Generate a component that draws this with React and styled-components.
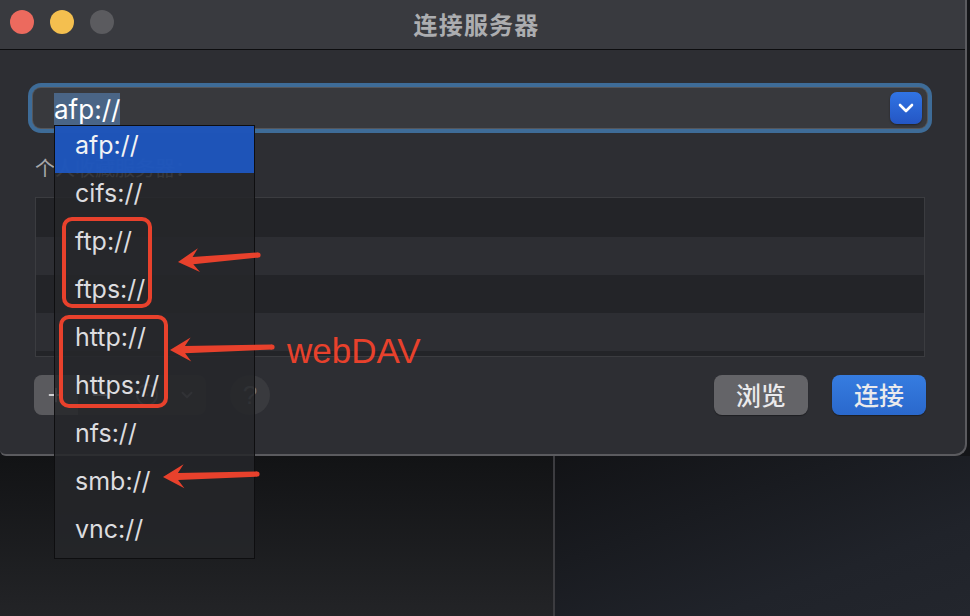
import React from "react";
import styled, { createGlobalStyle } from "styled-components";
import { Plus, Minus, CircleEllipsis, ChevronDown } from "lucide-react";

const Global = createGlobalStyle`
  html, body {
    margin: 0;
    padding: 0;
    background: #141518;
  }
  body {
    font-family: "Inter", "Noto Sans CJK SC", sans-serif;
  }
`;

const PROTOCOLS = ["afp://", "cifs://", "ftp://", "ftps://", "http://", "https://", "nfs://", "smb://", "vnc://"];

// red markup drawn on top of the screenshot
const ARROWS = [
  { tail: [258, 255], tip: [178, 262] },
  { tail: [272, 347], tip: [170, 350] },
  { tail: [257, 474], tip: [163, 477] },
];

const arrowPoints = ({ tail, tip }) => {
  const dx = tip[0] - tail[0];
  const dy = tip[1] - tail[1];
  const len = Math.hypot(dx, dy);
  const ux = dx / len;
  const uy = dy / len;
  const nx = -uy;
  const ny = ux;
  const L = 21;
  const W = 12;
  const notch = 6;
  const pt = (base, along, side) => [base[0] + ux * along + nx * side, base[1] + uy * along + ny * side];
  const pts = [
    tip,
    pt(tip, -L, W),
    pt(tip, -(L - notch), 3.6),
    pt(tail, 0, 2.6),
    pt(tail, 0, -2.6),
    pt(tip, -(L - notch), -3.6),
    pt(tip, -L, -W),
  ];
  return pts.map((p) => p.map((v) => v.toFixed(1)).join(",")).join(" ");
};

const Screen = styled.div`
  position: relative;
  width: 970px;
  height: 616px;
  overflow: hidden;
  background: #141518;
`;

const Window = styled.div`
  width: 967px;
  height: 456px;
  box-sizing: border-box;
  background: #2d2e33;
  border-right: 2px solid #5b5b5f;
  border-bottom: 2px solid #5b5b5f;
  border-radius: 0 0 12px 6px;
  overflow: hidden;
  display: flex;
  flex-direction: column;
`;

const TitleBar = styled.div`
  height: 50px;
  flex: none;
  background: #393a3f;
  border-bottom: 1px solid #0d0d0f;
  display: flex;
  align-items: flex-start;
  padding: 10px 0 0 10px;
  box-sizing: border-box;
`;

const Lights = styled.div`
  display: flex;
  gap: 16px;
`;

const Light = styled.span`
  width: 24px;
  height: 24px;
  border-radius: 50%;
  background: ${(p) => p.$color};
`;

const Title = styled.div`
  flex: 1;
  text-align: center;
  margin: -4px 0 0 -126px;
  font-size: 24px;
  font-weight: 700;
  color: #acadb0;
  letter-spacing: 1.2px;
  font-family: "Noto Sans CJK SC", sans-serif;
`;

const Body = styled.div`
  flex: 1;
  display: flex;
  flex-direction: column;
  padding: 38px 40px 0 35px;
`;

const Combo = styled.div`
  height: 40px;
  margin: 0 -2px;
  border-radius: 8px;
  background: #38393d;
  box-shadow: 0 0 0 1px #55565a, 0 0 0 5px #3e6c98;
  display: flex;
  align-items: center;
  padding: 0 5px 0 21px;
`;

const Selected = styled.span`
  font-size: 26px;
  line-height: 33px;
  margin-top: 3px;
  color: #ffffff;
  background: #4a6586;
`;

const DropButton = styled.div`
  margin-left: auto;
  width: 32px;
  height: 32px;
  border-radius: 7px;
  background: linear-gradient(#3174e4, #2456c4);
  box-shadow: 0 1px 2px rgba(0, 0, 0, 0.4);
  display: flex;
  align-items: center;
  justify-content: center;
  color: #fff;
`;

const Label = styled.div`
  margin-top: 28px;
  font-size: 20px;
  line-height: 24px;
  color: #a6a7aa;
  font-family: "Noto Sans CJK SC", sans-serif;
`;

const Table = styled.div`
  margin-top: 17px;
  height: 160px;
  box-sizing: border-box;
  border: 1px solid #3b3c40;
  display: flex;
  flex-direction: column;
  overflow: hidden;
`;

const Row = styled.div`
  height: ${(p) => p.$h}px;
  flex: none;
  background: ${(p) => (p.$dark ? "#232428" : "#2d2e33")};
`;

const BottomBar = styled.div`
  margin: 18px -1px 0;
  height: 40px;
  display: flex;
  align-items: center;
`;

const Segmented = styled.div`
  width: 172px;
  height: 40px;
  border-radius: 8px;
  background: #393a3e;
  display: flex;
  align-items: center;
  overflow: hidden;
`;

const Segment = styled.div`
  width: ${(p) => p.$w}px;
  height: 100%;
  display: flex;
  align-items: center;
  justify-content: center;
  background: ${(p) => (p.$active ? "#5a5a5e" : "transparent")};
  color: ${(p) => (p.$dim ? "#77787c" : "#d0d0d3")};
`;

const HelpButton = styled.div`
  margin-left: 24px;
  width: 40px;
  height: 40px;
  border-radius: 50%;
  background: #393a3e;
  color: #75767a;
  font-size: 26px;
  display: flex;
  align-items: center;
  justify-content: center;
  font-family: "Liberation Sans", sans-serif;
`;

const PushButton = styled.div`
  margin-left: ${(p) => p.$gap}px;
  width: 94px;
  height: 40px;
  border-radius: 8px;
  box-sizing: border-box;
  display: flex;
  align-items: center;
  justify-content: center;
  padding-bottom: 3px;
  font-size: 25px;
  font-weight: 500;
  color: #eaeaec;
  font-family: "Noto Sans CJK SC", sans-serif;
  background: ${(p) => (p.$primary ? "linear-gradient(#367ce0, #2a68cc)" : "#646468")};
  box-shadow: 0 1px 1px rgba(0, 0, 0, 0.35);
`;

const Desktop = styled.div`
  display: flex;
  height: 160px;
`;

const Pane = styled.div`
  width: ${(p) => (p.$w ? `${p.$w}px` : "auto")};
  flex: ${(p) => (p.$w ? "none" : 1)};
  background: ${(p) => p.$bg};
  border-right: ${(p) => (p.$edge ? "2px solid #3c3c40" : "none")};
  box-shadow: ${(p) => (p.$edge ? "1px 0 0 #0a0a0c" : "none")};
`;

const Menu = styled.div`
  position: absolute;
  left: 54px;
  top: 125px;
  width: 201px;
  box-sizing: border-box;
  border: 1px solid #0e0e10;
  background: rgba(37, 38, 42, 0.86);
  display: flex;
  flex-direction: column;
`;

const MenuItem = styled.div`
  height: 48px;
  box-sizing: border-box;
  display: flex;
  align-items: center;
  padding: 0 0 11px 20px;
  font-size: 25px;
  color: #dcdcdf;
  background: ${(p) => (p.$active ? "rgba(30, 90, 200, 0.9)" : "transparent")};
  ${(p) => p.$active && "height: 47px; margin-bottom: 1px; padding-bottom: 10px; color: #f2f2f4;"}
`;

const MarkBox = styled.div`
  position: absolute;
  left: ${(p) => p.$x}px;
  top: ${(p) => p.$y}px;
  width: ${(p) => p.$w}px;
  height: ${(p) => p.$h}px;
  box-sizing: border-box;
  border: 4px solid #e8412c;
  border-radius: 10px;
`;

const MarkText = styled.div`
  position: absolute;
  left: 287px;
  top: 333px;
  font-family: "Liberation Sans", sans-serif;
  font-size: 35px;
  line-height: 35px;
  color: #e8412c;
`;

const Overlay = styled.svg`
  position: absolute;
  left: 0;
  top: 0;
  pointer-events: none;
`;

const App = () => {
  const rows = [39, 38, 38, 38, 10];
  return (
    <Screen>
      <Global />

      <Window>
        {/* title bar */}
        <TitleBar>
          <Lights>
            <Light $color="#ec6a5e" />
            <Light $color="#f4bf4f" />
            <Light $color="#5b5b5f" />
          </Lights>
          <Title>连接服务器</Title>
        </TitleBar>

        <Body>
          {/* address field */}
          <Combo>
            <Selected>afp://</Selected>
            <DropButton>
              <svg width="16" height="10" viewBox="0 0 16 10">
                <path d="M2 2 L8 8 L14 2" fill="none" stroke="#fff" strokeWidth="2.6" strokeLinecap="round" strokeLinejoin="round" />
              </svg>
            </DropButton>
          </Combo>

          <Label>个人收藏服务器：</Label>

          {/* favourites list */}
          <Table>
            {rows.map((h, i) => (
              <Row key={i} $h={h} $dark={i % 2 === 0} />
            ))}
          </Table>

          {/* bottom controls */}
          <BottomBar>
            <Segmented>
              <Segment $w={44} $active>
                <Plus size={22} strokeWidth={2} />
              </Segment>
              <Segment $w={44}>
                <Minus size={22} strokeWidth={2} />
              </Segment>
              <Segment $w={50} $dim>
                <CircleEllipsis size={24} strokeWidth={1.8} />
              </Segment>
              <Segment $w={30} $dim>
                <ChevronDown size={18} strokeWidth={2.4} />
              </Segment>
            </Segmented>
            <HelpButton>?</HelpButton>
            <PushButton $gap={444}>浏览</PushButton>
            <PushButton $gap={24} $primary>
              连接
            </PushButton>
          </BottomBar>
        </Body>
      </Window>

      {/* windows behind */}
      <Desktop>
        <Pane $w={553} $edge $bg="linear-gradient(#121315, #232427)" />
        <Pane $bg="linear-gradient(160deg, #121316, #20232a 70%, #23262d)" />
      </Desktop>

      {/* open protocol menu */}
      <Menu>
        {PROTOCOLS.map((p, i) => (
          <MenuItem key={p} $active={i === 0}>
            {p}
          </MenuItem>
        ))}
      </Menu>

      {/* annotations */}
      <MarkBox $x={62} $y={217} $w={90} $h={91} />
      <MarkBox $x={59} $y={315} $w={109} $h={93} />
      <MarkText>webDAV</MarkText>
      <Overlay width="970" height="616" viewBox="0 0 970 616">
        {ARROWS.map((a, i) => (
          <g key={i} fill="#e8412c">
            <polygon points={arrowPoints(a)} />
            <circle cx={a.tail[0]} cy={a.tail[1]} r="2.6" />
          </g>
        ))}
      </Overlay>
    </Screen>
  );
};

export default App;
